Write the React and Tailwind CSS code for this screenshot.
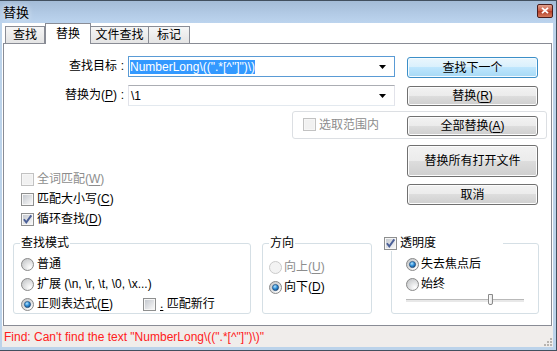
import React from "react";

const CJK = "font-['Liberation_Sans','Noto_Sans_CJK_SC',sans-serif]";

function Check({ checked = false, disabled = false }) {
  return (
    <svg width="13" height="13" viewBox="0 0 13 13" className="shrink-0 block">
      <defs>
        <linearGradient id="cbfill" x1="0" y1="0" x2="1" y2="1">
          <stop offset="0" stopColor="#c5c9cf" />
          <stop offset="1" stopColor="#f7f7f7" />
        </linearGradient>
      </defs>
      <rect x="0.5" y="0.5" width="12" height="12" fill="#f6f6f6" stroke={disabled ? "#c2c2c2" : "#8e8f8f"} />
      <rect x="2" y="2" width="9" height="9" fill={disabled ? "#f1f1f1" : "url(#cbfill)"} />
      {checked && (
        <path d="M2.9 6.2 L5.3 9.4 L10.3 2.4" fill="none" stroke="#4a5f97" strokeWidth="1.9" />
      )}
    </svg>
  );
}

function Radio({ checked = false, disabled = false }) {
  return (
    <svg width="13" height="13" viewBox="0 0 13 13" className="shrink-0 block">
      <defs>
        <radialGradient id="rfill" cx="0.7" cy="0.75" r="0.85">
          <stop offset="0" stopColor="#ffffff" />
          <stop offset="1" stopColor="#c4c6c8" />
        </radialGradient>
        <radialGradient id="rdot" cx="0.4" cy="0.35" r="0.75">
          <stop offset="0" stopColor="#b8e4fb" />
          <stop offset="0.45" stopColor="#3393dc" />
          <stop offset="1" stopColor="#0c3d74" />
        </radialGradient>
      </defs>
      <circle cx="6.5" cy="6.5" r="6" fill={disabled ? "#f3f3f3" : "url(#rfill)"} stroke={disabled ? "#cacaca" : "#8a8a8a"} />
      {checked && <circle cx="6.5" cy="6.5" r="3.1" fill="url(#rdot)" stroke="#1a3e68" strokeWidth="0.6" />}
    </svg>
  );
}

function U({ children }) {
  return <span className="underline underline-offset-[2px] decoration-[1px]">{children}</span>;
}

function Colon() {
  return <span className="inline-block w-[11px] text-center">:</span>;
}

function Btn({ children, def = false, className = "" }) {
  return (
    <div
      className={`w-[131px] rounded-[3px] border flex items-center justify-center leading-none ${
        def
          ? "border-[#3c8fc8] bg-[linear-gradient(#eaf6fd_0%,#d9f0fc_50%,#bee6fd_50%,#a7d9f5_100%)] shadow-[inset_0_0_0_1px_#f4fbff]"
          : "border-[#707070] bg-[linear-gradient(#f2f2f2_0%,#ebebeb_50%,#dddddd_50%,#cfcfcf_100%)] shadow-[inset_0_0_0_1px_#fcfcfc]"
      } ${className}`}
    >
      {children}
    </div>
  );
}

function Arrow() {
  return (
    <svg width="7" height="4" viewBox="0 0 7 4" className="block shrink-0">
      <path d="M0 0 H7 L3.5 4 Z" fill="#000" />
    </svg>
  );
}

function Combo({ children, focus = false }) {
  return (
    <div
      className={`w-[267px] h-[21px] border bg-white flex items-center ${
        focus
          ? "border-[#5a9bd5]"
          : "border-[#abadb3] border-l-[#e2e3ea] border-r-[#e2e3ea] border-b-[#e3e9ef]"
      }`}
    >
      <div className="flex-1 pl-[1px] flex items-center h-full overflow-hidden whitespace-nowrap">{children}</div>
      <div className="w-[13px] mr-[5px] flex items-center justify-center">
        <Arrow />
      </div>
    </div>
  );
}

function Group({ title, className = "", titleClass = "", children }) {
  return (
    <div className={`relative border border-[#d5dfe5] rounded-[3px] h-[71px] ${className}`}>
      <div className={`absolute top-[-9px] h-[16px] leading-[16px] bg-white flex items-center ${titleClass}`}>{title}</div>
      {children}
    </div>
  );
}

export default function App() {
  return (
    <div className={`w-[557px] h-[351px] bg-[#bcd3ea] border-t border-r border-b border-[#42505f] flex flex-col overflow-hidden text-[12px] text-black ${CJK}`}>
      {/* title bar */}
      <div className="h-[22px] shrink-0 flex items-center bg-[linear-gradient(#a4bcd7,#b3cbe6_60%,#bcd4ee)] pl-[3px] pr-[3px]">
        <span className="text-[13px] leading-none text-black [text-shadow:0_0_6px_#ffffff]">替换</span>
        <div className="flex-1" />
        <div className="w-[16px] h-[14px] mt-[-3px] rounded-[2px] border border-[#4a1d1d] bg-[linear-gradient(#e0a08c,#c8573f_50%,#b23b26_51%,#d57a5c)] flex items-center justify-center">
          <svg width="8" height="7" viewBox="0 0 8 7">
            <path d="M1 0.8 L7 6.2 M7 0.8 L1 6.2" stroke="#ffffff" strokeWidth="1.8" />
          </svg>
        </div>
      </div>

      {/* client */}
      <div className="flex-1 ml-[2px] mr-[3px] mb-[3px] bg-white flex flex-col">
        {/* tabs */}
        <div className="h-[20px] shrink-0 flex items-end pl-[3px] relative z-10">
          <div className="w-[40px] h-[17px] border border-[#898c95] border-b-0 bg-[linear-gradient(#f6f6f6,#e4e4e4)] flex items-center justify-center leading-none">查找</div>
          <div className="w-[46px] h-[21px] border border-[#898c95] border-b-0 bg-white mb-[-1px] flex items-center justify-center leading-none pb-[1px]">替换</div>
          <div className="w-[58px] h-[17px] border border-[#898c95] border-b-0 border-l-0 bg-[linear-gradient(#f6f6f6,#e4e4e4)] flex items-center justify-center leading-none">文件查找</div>
          <div className="w-[41px] h-[17px] border border-[#898c95] border-b-0 border-l-0 bg-[linear-gradient(#f6f6f6,#e4e4e4)] flex items-center justify-center leading-none">标记</div>
        </div>

        {/* panel */}
        <div className="w-[549px] ml-[1px] h-[283px] border border-[#898c95] bg-white flex flex-col">
          {/* row 1 */}
          <div className="flex items-start mt-[12px]">
            <div className="w-[124px] h-[21px] leading-[21px] text-right">
              查找目标<Colon />
            </div>
            <Combo focus>
              <span className="bg-[#3399ff] text-white leading-[14px] h-[14px] flex items-center">NumberLong\((".*[^"]")\)</span>
            </Combo>
            <Btn def className="ml-[12px] mt-[1px] h-[21px]">查找下一个</Btn>
          </div>
          {/* row 2 */}
          <div className="flex items-start mt-[7px]">
            <div className="w-[124px] h-[21px] leading-[21px] text-right">
              替换为(<U>P</U>)<Colon />
            </div>
            <Combo>
              <span className="pl-[1px]">\1</span>
            </Combo>
            <Btn className="ml-[12px] mt-[1px] h-[20px]">
              替换(<U>R</U>)
            </Btn>
          </div>
          {/* row 3: selection box */}
          <div className="ml-[288px] mt-[5px] w-[255px] h-[28px] border border-[#dcdfe3] rounded-[3px] flex items-start">
            <div className="flex items-center gap-[3px] ml-[10px] mt-[6px] text-[#8d8d8d]">
              <Check disabled />
              <span className="leading-none">选取范围内</span>
            </div>
            <Btn className="ml-auto mr-[8px] mt-[4px] h-[20px]">
              全部替换(<U>A</U>)
            </Btn>
          </div>
          {/* lower section */}
          <div className="flex">
            <div className="w-[403px] pl-[17px] pt-[30px] flex flex-col">
              <div className="h-[20px] flex items-center gap-[3px] text-[#8d8d8d]">
                <Check disabled />
                <span className="leading-none">全词匹配(<U>W</U>)</span>
              </div>
              <div className="h-[20px] flex items-center gap-[3px]">
                <Check />
                <span className="leading-none">匹配大小写(<U>C</U>)</span>
              </div>
              <div className="h-[20px] flex items-center gap-[3px]">
                <Check checked />
                <span className="leading-none">循环查找(<U>D</U>)</span>
              </div>
            </div>
            <div className="pt-[6px] flex flex-col">
              <Btn className="h-[32px]">替换所有打开文件</Btn>
              <Btn className="h-[21px] mt-[7px]">取消</Btn>
            </div>
          </div>
          {/* groups */}
          <div className="flex mt-[14px] pl-[9px]">
            <Group title="查找模式" className="w-[238px] pl-[7px] pt-[10px]" titleClass="left-[6px] px-[1px]">
              <div className="h-[20px] flex items-center gap-[3px]">
                <Radio />
                <span className="leading-none">普通</span>
              </div>
              <div className="h-[20px] flex items-center gap-[3px]">
                <Radio />
                <span className="leading-none">扩展 (\n, \r, \t, \0, \x...)</span>
              </div>
              <div className="h-[20px] flex items-center">
                <div className="w-[122px] flex items-center gap-[3px]">
                  <Radio checked />
                  <span className="leading-none">正则表达式(<U>E</U>)</span>
                </div>
                <div className="flex items-center gap-[4px]">
                  <Check />
                  <span className="leading-none">
                    <U>.</U> 匹配新行
                  </span>
                </div>
              </div>
            </Group>
            <Group title="方向" className="w-[110px] ml-[11px] pl-[6px] pt-[13px]" titleClass="left-[6px] px-[1px]">
              <div className="h-[20px] flex items-center gap-[2px] text-[#8d8d8d]">
                <Radio disabled />
                <span className="leading-none">向上(<U>U</U>)</span>
              </div>
              <div className="h-[20px] flex items-center gap-[2px]">
                <Radio checked />
                <span className="leading-none">向下(<U>D</U>)</span>
              </div>
            </Group>
            <Group
              title={
                <span className="flex items-center gap-[3px] w-[119px]">
                  <Check checked />
                  <span className="leading-none">透明度</span>
                </span>
              }
              className="w-[148px] ml-[19px] pl-[14px] pt-[10px]"
              titleClass="left-[-8px]"
            >
              <div className="h-[20px] flex items-center gap-[2px]">
                <Radio checked />
                <span className="leading-none">失去焦点后</span>
              </div>
              <div className="h-[20px] flex items-center gap-[2px]">
                <Radio />
                <span className="leading-none">始终</span>
              </div>
              <div className="h-[12px] w-[118px] flex items-center relative">
                <div className="w-full h-[3px] border-t border-[#b9b9b9] bg-[#e8e8e8]" />
                <div className="absolute left-[82px] top-[0px] w-[5px] h-[11px] border border-[#8a8a8a] rounded-b-[2px] bg-[linear-gradient(90deg,#ffffff,#e6e6e6)]" />
              </div>
            </Group>
          </div>
        </div>

        {/* status bar */}
        <div className="flex-1 bg-[#f0edeb] flex items-center relative">
          <span className="pl-[2px] text-[12px] leading-none text-[#ff2020] whitespace-nowrap">
            Find: Can't find the text "NumberLong\((".*[^"]")\)"
          </span>
          <svg width="10" height="10" viewBox="0 0 10 10" className="absolute right-[1px] bottom-[1px]">
            {[
              [8, 0], [8, 3], [5, 3], [8, 6], [5, 6], [2, 6],
            ].map(([x, y], i) => (
              <rect key={i} x={x} y={y + 2} width="2" height="2" fill="#b8b4b0" />
            ))}
          </svg>
        </div>
      </div>
    </div>
  );
}
